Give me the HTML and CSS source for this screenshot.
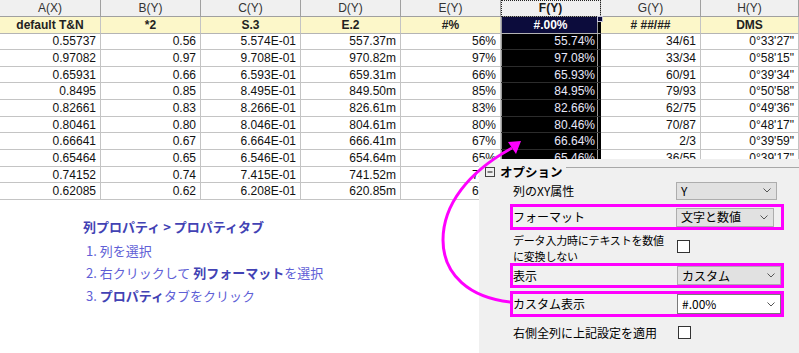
FILE: index.html
```html
<!DOCTYPE html>
<html lang="ja">
<head>
    <meta charset="UTF-8">
    <title>列プロパティ</title>
    <link rel="stylesheet" href="styles.css">
</head>
<body>
<div class="page">
    <div class="sheet">
        <div class="hd">A(X)</div><div class="hd">B(Y)</div><div class="hd">C(Y)</div><div class="hd">D(Y)</div><div class="hd">E(Y)</div><div class="hd focus">F(Y)</div><div class="hd">G(Y)</div><div class="hd">H(Y)</div>
        <div class="fm">default T&amp;N</div><div class="fm">*2</div><div class="fm">S.3</div><div class="fm">E.2</div><div class="fm">#%</div><div class="fm sel">#.00%</div><div class="fm"># ##/##</div><div class="fm">DMS</div>
        <div>0.55737</div><div>0.56</div><div>5.574E-01</div><div>557.37m</div><div>56%</div><div class="sel">55.74%</div><div>34/61</div><div>0°33'27"</div>
        <div>0.97082</div><div>0.97</div><div>9.708E-01</div><div>970.82m</div><div>97%</div><div class="sel">97.08%</div><div>33/34</div><div>0°58'15"</div>
        <div>0.65931</div><div>0.66</div><div>6.593E-01</div><div>659.31m</div><div>66%</div><div class="sel">65.93%</div><div>60/91</div><div>0°39'34"</div>
        <div>0.8495</div><div>0.85</div><div>8.495E-01</div><div>849.50m</div><div>85%</div><div class="sel">84.95%</div><div>79/93</div><div>0°50'58"</div>
        <div>0.82661</div><div>0.83</div><div>8.266E-01</div><div>826.61m</div><div>83%</div><div class="sel">82.66%</div><div>62/75</div><div>0°49'36"</div>
        <div>0.80461</div><div>0.80</div><div>8.046E-01</div><div>804.61m</div><div>80%</div><div class="sel">80.46%</div><div>70/87</div><div>0°48'17"</div>
        <div>0.66641</div><div>0.67</div><div>6.664E-01</div><div>666.41m</div><div>67%</div><div class="sel">66.64%</div><div>2/3</div><div>0°39'59"</div>
        <div>0.65464</div><div>0.65</div><div>6.546E-01</div><div>654.64m</div><div>65%</div><div class="sel">65.46%</div><div>36/55</div><div>0°39'17"</div>
        <div>0.74152</div><div>0.74</div><div>7.415E-01</div><div>741.52m</div><div>74%</div><div class="sel"></div><div></div><div></div>
        <div>0.62085</div><div>0.62</div><div>6.208E-01</div><div>620.85m</div><div>62%</div><div class="sel"></div><div></div><div></div>
    </div>

    <div class="steps">
        <div class="steps-title">列プロパティ &gt; プロパティタブ</div>
        <ol>
            <li>列を選択</li>
            <li>右クリックして <b>列フォーマット</b>を選択</li>
            <li><b>プロパティ</b>タブをクリック</li>
        </ol>
    </div>

    <div class="options">
        <div class="grp-head">
            <svg class="grp-toggle" width="10" height="10" viewBox="0 0 10 10"><rect x="0.5" y="0.5" width="9" height="9" fill="none" stroke="#444"/><path d="M2.5 5h5" stroke="#111"/></svg>
            <span class="grp-title">オプション</span>
            <span class="grp-line"></span>
        </div>

        <div class="opt-row row-xy">
            <span class="opt-label">列のXY属性</span>
            <span class="combo">Y<svg width="8" height="5" viewBox="0 0 8 5"><path d="M0.5 0.5l3.5 3.5 3.5-3.5" fill="none" stroke="#555"/></svg></span>
        </div>
        <div class="opt-row mark row-fmt">
            <span class="opt-label">フォーマット</span>
            <span class="combo">文字と数値<svg width="8" height="5" viewBox="0 0 8 5"><path d="M0.5 0.5l3.5 3.5 3.5-3.5" fill="none" stroke="#555"/></svg></span>
        </div>
        <div class="opt-row row-text">
            <span class="opt-label two-line">データ入力時にテキストを数値<br>に変換しない</span>
            <span class="check"></span>
        </div>
        <div class="opt-row mark row-disp">
            <span class="opt-label">表示</span>
            <span class="combo">カスタム<svg width="8" height="5" viewBox="0 0 8 5"><path d="M0.5 0.5l3.5 3.5 3.5-3.5" fill="none" stroke="#555"/></svg></span>
        </div>
        <div class="opt-row mark row-custom">
            <span class="opt-label">カスタム表示</span>
            <span class="combo edit">#.00%<svg width="8" height="5" viewBox="0 0 8 5"><path d="M0.5 0.5l3.5 3.5 3.5-3.5" fill="none" stroke="#555"/></svg></span>
        </div>
        <div class="opt-row row-apply">
            <span class="opt-label">右側全列に上記設定を適用</span>
            <span class="check"></span>
        </div>
    </div>

    <svg class="arrow" width="799" height="353" viewBox="0 0 799 353">
        <path d="M511,302 C470,298 443,275 443,240 C443,205 468,172 512,148" fill="none" stroke="#ff00ff" stroke-width="3"/>
        <path d="M521,141 L508,142 L516,154 Z" fill="#ff00ff"/>
    </svg>
</div>
</body>
</html>
```

FILE: styles.css
```css
body {
    margin: 0;
    background: #fff;
    font-family: "Liberation Sans", Arial, sans-serif;
}

.page {
    position: relative;
    width: 799px;
    height: 353px;
    overflow: hidden;
}

/* worksheet */
.sheet {
    display: grid;
    grid-template-columns: 101px repeat(6, 100px) 98px;
    grid-template-rows: 17px 16.5px repeat(10, 16.67px);
    font-size: 12px;
}

.sheet > div {
    box-sizing: border-box;
    display: flex;
    align-items: center;
    justify-content: flex-end;
    padding-right: 4px;
    border-right: 1px solid #c4c4c4;
    border-bottom: 1px solid #c4c4c4;
    color: #111;
    white-space: nowrap;
    overflow: hidden;
}

.sheet > .sel {
    background: #000;
    color: #e8e8fa;
    padding-right: 5px;
    border-right-color: #000;
    border-bottom-color: #2c2c2c;
    box-shadow: inset 1px 0 0 #9a9a9a, inset -2px 0 0 #000, inset -3px 0 0 #9a9a9a;
}

.sheet > .hd {
    justify-content: center;
    padding: 0;
    background: #f0f0f0;
    color: #333;
    border-color: #a0a0a0;
}

.sheet > .hd.focus {
    outline: 1px dotted #222;
    outline-offset: -1px;
    font-weight: bold;
    color: #1a1a1a;
}

.sheet > .fm {
    justify-content: center;
    padding: 0;
    background: #fcf7c9;
    font-weight: bold;
    color: #222;
    border-bottom-color: #b4b4b4;
}

.sheet > .fm.sel {
    position: relative;
    z-index: 1;
    overflow: visible;
    background: #0c0c3c;
    color: #fff;
    border-right-color: #000;
}

.sheet > .fm.sel::after {
    content: "";
    position: absolute;
    right: -3px;
    top: -1px;
    width: 4px;
    height: 4px;
    background: #0c0c3c;
    border: 1px solid #c8c8d8;
}

/* instructions */
.steps {
    padding: 16px 0 0 83px;
    font-family: "Noto Sans CJK JP", sans-serif;
    font-size: 13px;
    color: #6060d6;
}

.steps-title {
    line-height: 22px;
    font-weight: bold;
    color: #4242b4;
}

.steps ol {
    margin: 2px 0 0 3px;
    padding: 0;
    list-style-position: inside;
}

.steps li {
    line-height: 22.4px;
}

.steps b {
    color: #4242b4;
}

/* options panel */
.options {
    position: absolute;
    left: 479px;
    top: 159px;
    z-index: 2;
    width: 320px;
    height: 194px;
    background: #f0f0f0;
    font-family: "Noto Sans CJK JP", sans-serif;
    font-size: 12px;
    color: #000;
}

.grp-head {
    display: flex;
    align-items: center;
    height: 10px;
    padding: 8px 0 0 6px;
}

.grp-toggle {
    flex: none;
}

.grp-title {
    margin-left: 5px;
    font-weight: bold;
    font-size: 12.5px;
    line-height: 10px;
}

.grp-line {
    flex: 1;
    align-self: flex-start;
    margin-left: 3px;
    border-top: 1px solid #a8a8a8;
}

.opt-row {
    box-sizing: border-box;
    display: flex;
    align-items: center;
    width: 274px;
    margin-left: 31px;
    border: 3px solid transparent;
}

.opt-row.mark {
    border-color: #ff00ff;
}

.opt-label {
    flex: none;
    width: 163px;
    line-height: 14px;
    white-space: nowrap;
}

.two-line {
    font-size: 11px;
    line-height: 16px;
    margin-top: 3px;
    letter-spacing: -0.2px;
}

.combo {
    box-sizing: border-box;
    display: flex;
    align-items: center;
    justify-content: space-between;
    padding: 0 5px 0 4px;
    background: #e1e1e1;
    border: 1px solid #adadad;
    line-height: 14px;
}

.combo.edit {
    background: #fff;
    border-color: #7a7a7a;
}

.check {
    box-sizing: border-box;
    width: 13px;
    height: 13px;
    margin-left: 1px;
    background: #fff;
    border: 1px solid #333;
}

.row-xy { height: 27px; }
.row-xy .combo { width: 101px; height: 18px; }

.row-fmt { height: 26px; }
.row-fmt .combo { width: 98px; height: 19px; }

.row-text { height: 33px; }

.row-disp { height: 25px; }
.row-disp .combo { width: 105px; height: 19px; margin-left: 1px; }

.row-custom { height: 26px; margin-top: 3px; }
.row-custom .combo { width: 104px; height: 20px; margin-left: 1px; }

.row-apply { height: 31px; }
.row-apply .check { margin-left: 2px; }

.arrow {
    position: absolute;
    left: 0;
    top: 0;
    z-index: 5;
    pointer-events: none;
}
```
